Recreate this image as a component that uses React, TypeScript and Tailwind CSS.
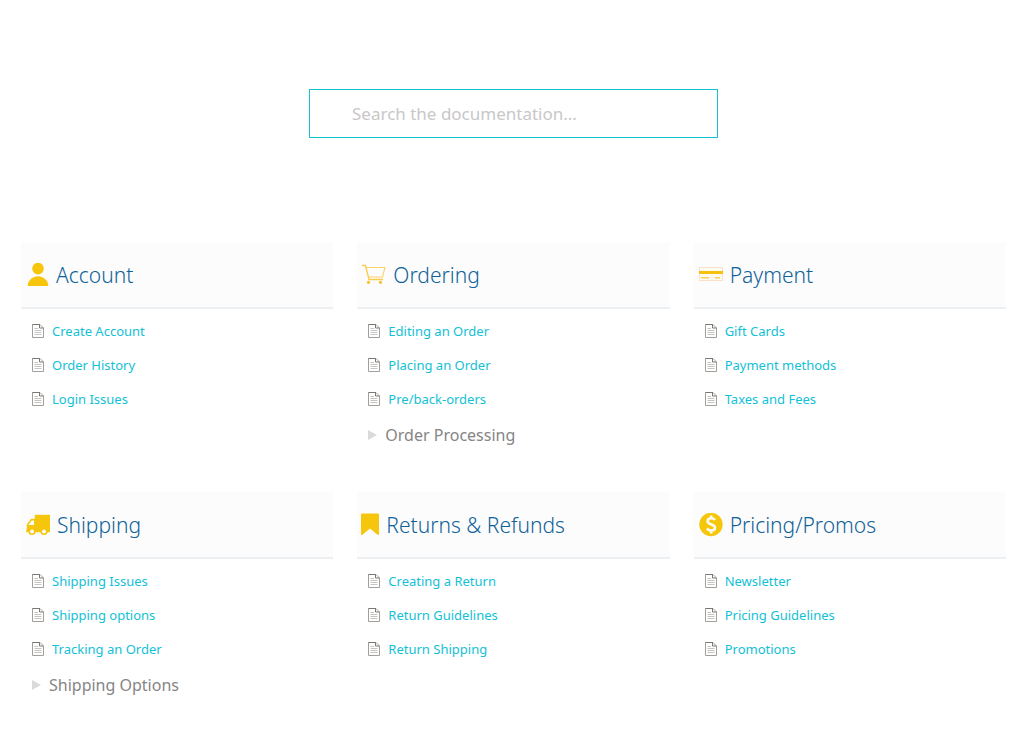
import type { ReactNode } from "react";

type Section = {
  title: string;
  icon: ReactNode;
  articles: string[];
  group?: string;
};

const UserIcon = () => (
  <svg className="ml-1.5 h-6 w-[22px] shrink-0 fill-[#f6c60c]" viewBox="0 0 22 24" aria-hidden="true">
    <circle cx="11" cy="5.600" r="5.800" />
    <path d="M0.800 23v-1.500c0.600-4.500 5-8.300 10.200-8.300s9.600 3.800 10.200 8.300v1.500z" />
  </svg>
);

const CartIcon = () => (
  <svg className="ml-[5px] h-6 w-6 shrink-0" viewBox="0 0 24 24" fill="none" stroke="#f8cb48" aria-hidden="true">
    <path d="M0 2.500h3.500L7 16.500h14" strokeWidth="1.300" />
    <path d="M4 4.500h19l-2.500 9.500H6.500" stroke="#fad06a" strokeWidth="1.100" />
    <circle cx="6.500" cy="19.300" r="1.600" fill="#f6c030" stroke="none" />
    <circle cx="18.500" cy="19.300" r="1.600" fill="#f6c030" stroke="none" />
  </svg>
);

const CardIcon = () => (
  <svg className="ml-[5px] h-6 w-6 shrink-0" viewBox="0 0 24 24" aria-hidden="true">
    <rect x="0.500" y="4.500" width="23" height="13" fill="#fffaf0" stroke="#fbe0cc" />
    <path d="M0 8h24v3H0z" fill="#f6c10c" />
    <path d="M2 14h8v1.500H2zM16 14h5v1.500h-5z" fill="#f8cf58" />
  </svg>
);

const TruckIcon = () => (
  <svg className="ml-[5px] h-6 w-6 shrink-0" viewBox="0 0 24 24" aria-hidden="true">
    <path
      d="M9 2h15v17H0.500v-2.500H1V11.500L5 6h4z"
      fill="#f6c60c"
      stroke="#f6c60c"
      strokeLinejoin="round"
      strokeWidth="0.400"
    />
    <path d="M5.700 7.500H8V12H2.500z" fill="#fcfcfc" />
    <circle cx="6" cy="18.500" r="2.800" fill="#fcfcfc" stroke="#f6c60c" strokeWidth="1.600" />
    <circle cx="18" cy="18.500" r="2.800" fill="#fcfcfc" stroke="#f6c60c" strokeWidth="1.600" />
  </svg>
);

const BookmarkIcon = () => (
  <svg className="ml-1 h-6 w-[18px] shrink-0 fill-[#f6c60c]" viewBox="0 0 18 24" aria-hidden="true">
    <path d="M1 0.500h16a1 1 0 0 1 1 1V21q0 1.600-1.400 0.700L9 15.500 1.400 21.700Q0 22.600 0 21V1.500a1 1 0 0 1 1-1z" />
  </svg>
);

const DollarIcon = () => (
  <svg className="ml-[5px] h-6 w-6 shrink-0" viewBox="0 0 24 24" fill="none" aria-hidden="true">
    <circle cx="12" cy="11.500" r="11.700" fill="#f6c60c" />
    <path
      d="M16 7C15 5.700 13.700 5.200 12.200 5.200 10 5.200 8.600 6.400 8.600 8.200c0 4 7.400 2.400 7.400 6.400 0 1.900-1.600 3-3.800 3-1.700 0-3.200-.6-4.300-1.900M12.200 2.500v3M12.200 17.500v3"
      stroke="#fffdf2"
      strokeWidth="2.600"
    />
  </svg>
);

const FileIcon = () => (
  <svg className="h-[15px] w-3 shrink-0" viewBox="0 0 12 15" fill="none" aria-hidden="true">
    <path d="M0.500 0.500h7.500l3.500 3.500v9.500h-11z" fill="#fff" stroke="#a39e99" />
    <path d="M0.500 0.500h7.500M7.500 0.500v3.500h4" stroke="#7b7773" />
    <path d="M2.500 4.500h3.500M2.500 6.500h7M2.500 8.500h7M2.500 10.500h7" stroke="#c4c4c4" />
  </svg>
);

const sections: Section[] = [
  { title: "Account", icon: <UserIcon />, articles: ["Create Account", "Order History", "Login Issues"] },
  {
    title: "Ordering",
    icon: <CartIcon />,
    articles: ["Editing an Order", "Placing an Order", "Pre/back-orders"],
    group: "Order Processing",
  },
  { title: "Payment", icon: <CardIcon />, articles: ["Gift Cards", "Payment methods", "Taxes and Fees"] },
  {
    title: "Shipping",
    icon: <TruckIcon />,
    articles: ["Shipping Issues", "Shipping options", "Tracking an Order"],
    group: "Shipping Options",
  },
  {
    title: "Returns & Refunds",
    icon: <BookmarkIcon />,
    articles: ["Creating a Return", "Return Guidelines", "Return Shipping"],
  },
  {
    title: "Pricing/Promos",
    icon: <DollarIcon />,
    articles: ["Newsletter", "Pricing Guidelines", "Promotions"],
  },
];

function SectionCard({ title, icon, articles, group }: Section) {
  return (
    <section>
      <header className="flex items-center gap-[7px] border-b-2 border-[#ecf0f3] bg-[#fcfcfc] py-4">
        {icon}
        <h2 className="pt-0.5 text-[21px] leading-[31px] font-light text-[#0f6299]">{title}</h2>
      </header>
      <ul className="pt-[5px]">
        {articles.map((article) => (
          <li key={article} className="flex h-[34px] items-center gap-2 pl-[11px]">
            <FileIcon />
            <a href="#" className="pt-0.5 text-[13px] text-[#12c1d6]">
              {article}
            </a>
          </li>
        ))}
      </ul>
      {group && (
        <button type="button" className="flex h-[38px] items-center gap-2 pl-[11px] text-base text-[#858585]">
          <svg className="h-[10px] w-[9px] fill-[#d9dadc]" viewBox="0 0 9 10" aria-hidden="true">
            <path d="M0 0l9 5-9 5z" />
          </svg>
          {group}
        </button>
      )}
    </section>
  );
}

export default function App() {
  return (
    <main className="min-h-screen bg-white pt-[89px] pr-[22px] pb-12 pl-[21px] font-['Noto_Sans','Open_Sans',sans-serif]">
      <form role="search" className="mx-auto max-w-[409px]">
        <input
          type="search"
          aria-label="Search the documentation"
          placeholder="Search the documentation..."
          className="block h-[49px] w-full appearance-none border border-[#14c4cf] bg-white pr-4 pl-[42px] text-[17px] text-[#555] outline-none placeholder:text-[#c8c8c8]"
        />
      </form>
      <div className="mt-[104px] grid grid-cols-1 gap-x-6 gap-y-[38px] sm:grid-cols-3">
        {sections.map((section) => (
          <SectionCard key={section.title} {...section} />
        ))}
      </div>
    </main>
  );
}
